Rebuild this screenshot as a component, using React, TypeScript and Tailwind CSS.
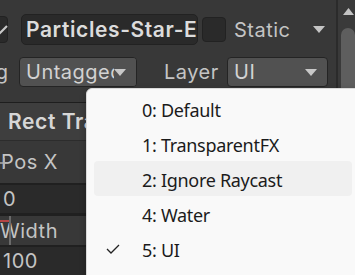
import React from 'react';

const Arrow = ({ className = '' }: { className?: string }) => (
  <svg width="12" height="7" viewBox="0 0 12 7" className={className}>
    <path d="M0 0 H12 L6 7 Z" fill="currentColor" />
  </svg>
);

const layers = ['0: Default', '1: TransparentFX', '2: Ignore Raycast', '4: Water', '5: UI'];

export default function App() {
  return (
    <div className="relative flex h-[275px] w-[355px] overflow-hidden bg-[#383838] font-['Inter',sans-serif] text-[20px] tracking-[0.5px] text-[#c4c4c4]">
      {/* Inspector body */}
      <div className="flex w-[336px] flex-col overflow-hidden">
        {/* Name row */}
        <div className="mt-[14px] flex h-[31px] items-center">
          <div className="relative -ml-[16px] h-[27px] w-[24px] shrink-0 rounded-[4px] border border-[#222] bg-[#2a2a2a]">
            <svg width="14" height="10" viewBox="0 0 14 10" className="absolute left-[9px] top-[8px] text-[#c8c8c8]">
              <path d="M1 5 L5 9 L13 1" stroke="currentColor" strokeWidth="2.2" fill="none" />
            </svg>
          </div>
          <div className="ml-[13px] flex h-[31px] w-[177px] shrink-0 items-center overflow-hidden rounded-[5px] border border-[#222] bg-[#2a2a2a] pl-[4px]">
            <span className="min-w-0 flex-1 overflow-hidden whitespace-nowrap text-[21px] font-semibold tracking-[0.6px] text-[#dcdcdc]">Particles-Star-Effect</span>
          </div>
          <div className="ml-[4px] h-[25px] w-[24px] shrink-0 rounded-[4px] border border-[#222] bg-[#2a2a2a]" />
          <span className="ml-[8px]">Static</span>
          <Arrow className="ml-auto mr-[11px] text-[#c4c4c4]" />
        </div>

        {/* Tag / Layer row */}
        <div className="mt-[12px] flex h-[30px] items-center">
          <span className="-ml-[28px] w-[38px] shrink-0">Tag</span>
          <div className="relative ml-[9px] flex h-[30px] w-[118px] shrink-0 items-center overflow-hidden rounded-[4px] border border-[#242424] bg-[#515151] pl-[6px]">
            <span className="whitespace-nowrap text-[#d2d2d2]">Untagged</span>
            <div className="absolute right-0 top-0 flex h-full w-[22px] items-center bg-[#515151]">
              <Arrow className="text-[#c8c8c8]" />
            </div>
          </div>
          <span className="ml-[27px]">Layer</span>
          <div className="ml-auto mr-[8px] flex h-[30px] w-[101px] shrink-0 items-center justify-between rounded-[4px] border border-[#242424] bg-[#515151] pl-[6px] pr-[10px]">
            <span className="text-[#d2d2d2]">UI</span>
            <Arrow className="text-[#c8c8c8]" />
          </div>
        </div>

        {/* Rect Transform */}
        <div className="mt-[15px] h-[1px] shrink-0 bg-[#1e1e1e]" />
        <div className="flex h-[37px] shrink-0 items-center bg-[#3e3e3e] pl-[8px]">
          <span className="whitespace-nowrap text-[21px] font-semibold tracking-[0.6px] text-[#d6d6d6]">Rect Transform</span>
        </div>
        <div className="h-[1px] shrink-0 bg-[#2c2c2c]" />
        <div className="relative flex h-[42px] shrink-0 items-center">
          <svg width="10" height="16" viewBox="0 0 10 16" className="absolute left-0 top-[14px] text-[#b0b0b0]">
            <path d="M0 8 H8 M4 3 V13" stroke="currentColor" strokeWidth="1.5" />
          </svg>
          <span className="pl-[1px]">Pos X</span>
        </div>
        <div className="h-[2px] shrink-0 bg-[#202020]" />
        <div className="flex h-[28px] shrink-0 items-center bg-[#2a2a2a] pl-[3px]">
          <span>0</span>
        </div>
        <div className="h-[3px] shrink-0 bg-[#202020]" />
        <div className="relative flex h-[29px] shrink-0 items-center">
          <div className="absolute left-0 top-[4px] h-[2px] w-[9px] bg-[#b54545]" />
          <div className="absolute left-[9px] top-0 h-full w-[2px] bg-[#6a6a6a]" />
          <span>Width</span>
        </div>
        <div className="h-[2px] shrink-0 bg-[#202020]" />
        <div className="flex h-[28px] shrink-0 items-center bg-[#2a2a2a] pl-[3px]">
          <span>100</span>
        </div>
      </div>

      {/* Scrollbar */}
      <div className="flex w-[19px] flex-col items-center border-l-2 border-[#2b2b2b] bg-[#3a3a3a] pl-[3px]">
        <svg width="11" height="7" viewBox="0 0 11 7" className="mt-[8px] text-[#c4c4c4]">
          <path d="M0 7 H11 L5.5 0 Z" fill="currentColor" />
        </svg>
        <div className="mt-[13px] w-[14px] flex-1 rounded-t-[7px] bg-[#5e5e5e]" />
      </div>

      {/* Layer popup */}
      <div className="absolute left-[86px] top-[88px] h-[200px] w-[274px] rounded-tl-[6px] border border-[#dadada] bg-[#f9f9f9] px-[7px] pt-[2px] font-['Noto_Sans',sans-serif] text-[18px] tracking-[-0.3px] text-[#1b1b1b] shadow-[0_2px_6px_rgba(0,0,0,0.25)]">
        {layers.map((name, i) => (
          <div
            key={name}
            className={`relative flex h-[35px] items-center rounded-[4px] pl-[48px] ${i === 2 ? 'bg-[#f0f0f0]' : ''}`}
          >
            {i === 4 && (
              <svg width="14" height="10" viewBox="0 0 14 10" className="absolute left-[12px] top-[13px]">
                <path d="M1 5 L5 9 L13 1" stroke="#222" strokeWidth="1.3" fill="none" />
              </svg>
            )}
            <span className="pt-[3px]">{name}</span>
          </div>
        ))}
      </div>
    </div>
  );
}
